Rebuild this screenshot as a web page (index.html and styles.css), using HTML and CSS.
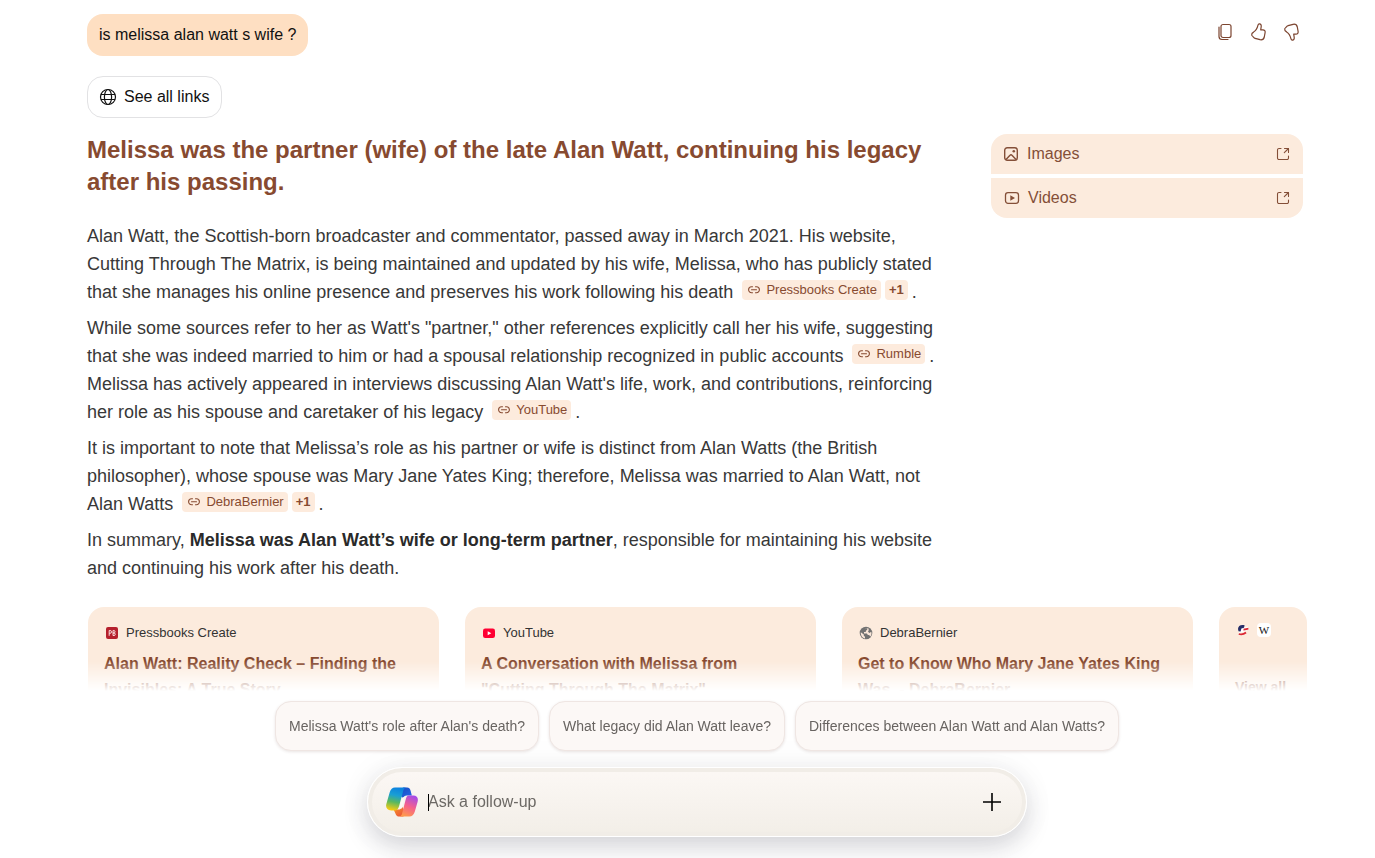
FILE: index.html
```html
<!DOCTYPE html>
<html lang="en">
<head>
<meta charset="utf-8">
<meta name="viewport" content="width=device-width, initial-scale=1">
<title>is melissa alan watt s wife ?</title>
<link rel="stylesheet" href="styles.css">
</head>
<body>
<svg class="sprite" aria-hidden="true">
  <symbol id="link" viewBox="0 0 14 14"><path d="M5.500 3.800H4.600a3 3 0 0 0 0 6h.9M8.500 3.800h.9a3 3 0 0 1 0 6h-.9M4.500 6.800h5" fill="none" stroke="currentColor" stroke-width="1.100" stroke-linecap="round"/></symbol>
  <symbol id="open" viewBox="0 0 14 14"><path d="M5 1.500H3A1.500 1.500 0 0 0 1.500 3v8A1.500 1.500 0 0 0 3 12.500h8a1.500 1.500 0 0 0 1.500-1.500V9M8.500 1.500h4v4M12.500 1.500L8.300 5.700" fill="none" stroke="currentColor" stroke-width="1.100" stroke-linecap="round" stroke-linejoin="round"/></symbol>
  <symbol id="thumb" viewBox="0 0 18 20"><path d="M10.300 1.900c1.500-.2 2.100 1.100 1.900 2.800l-.5 3.200h2.200c1.700 0 2.500 1.200 2.200 2.800l-.8 4.300c-.5 2.100-2 3.100-4.200 2.700l-5-1.400c-.9-.2-1.300-.8-1.900-1.500-.6-.7-1.300-.9-1.500-1.600-.2-1.300.6-2.400 1.900-3.100C6.700 8.900 8.200 6.500 9 3.200c.2-.8.600-1.200 1.300-1.300z" fill="none" stroke="currentColor" stroke-width="1.200" stroke-linejoin="round"/></symbol>
</svg>

<main class="page">
  <header class="topbar">
    <p class="query">is melissa alan watt s wife ?</p>
    <div class="actions">
      <button type="button" aria-label="Copy"><svg viewBox="0 0 18 20"><rect x="5" y="2.500" width="10" height="13" rx="2" fill="none" stroke="currentColor" stroke-width="1.200"/><path d="M3 5v9.500a3 3 0 0 0 3 3h6" fill="none" stroke="currentColor" stroke-width="1.200" stroke-linecap="round"/></svg></button>
      <button type="button" aria-label="Like"><svg viewBox="0 0 18 20"><use href="#thumb"/></svg></button>
      <button type="button" aria-label="Dislike"><svg class="flip" viewBox="0 0 18 20"><use href="#thumb"/></svg></button>
    </div>
  </header>

  <button type="button" class="all-links">
    <svg viewBox="0 0 18 18"><g fill="none" stroke="currentColor" stroke-width="1.200"><circle cx="9" cy="9" r="7.500"/><ellipse cx="9" cy="9" rx="3.600" ry="7.500"/><path d="M2 6.500h14M2 11.500h14"/></g></svg>
    See all links
  </button>

  <div class="columns">
    <article class="answer">
      <h1>Melissa was the partner (wife) of the late Alan Watt, continuing his legacy after his passing.</h1>
      <p>Alan Watt, the Scottish-born broadcaster and commentator, passed away in March 2021. His website, Cutting Through The Matrix, is being maintained and updated by his wife, Melissa, who has publicly stated that she manages his online presence and preserves his work following his death <span class="cites"><a class="cite" href="#"><svg><use href="#link"/></svg>Pressbooks Create</a><a class="cite more" href="#">+1</a></span>.</p>
      <p>While some sources refer to her as Watt's "partner," other references explicitly call her his wife, suggesting that she was indeed married to him or had a spousal relationship recognized in public accounts <span class="cites"><a class="cite" href="#"><svg><use href="#link"/></svg>Rumble</a></span>. Melissa has actively appeared in interviews discussing Alan Watt's life, work, and contributions, reinforcing her role as his spouse and caretaker of his legacy <span class="cites"><a class="cite" href="#"><svg><use href="#link"/></svg>YouTube</a></span>.</p>
      <p>It is important to note that Melissa’s role as his partner or wife is distinct from Alan Watts (the British philosopher), whose spouse was Mary Jane Yates King; therefore, Melissa was married to Alan Watt, not Alan Watts <span class="cites"><a class="cite" href="#"><svg><use href="#link"/></svg>DebraBernier</a><a class="cite more" href="#">+1</a></span>.</p>
      <p>In summary, <strong>Melissa was Alan Watt’s wife or long-term partner</strong>, responsible for maintaining his website and continuing his work after his death.</p>
    </article>

    <aside class="media">
      <a href="#"><svg viewBox="0 0 16 16"><g fill="none" stroke="currentColor" stroke-width="1.400"><rect x="1.700" y="1.700" width="12.600" height="12.600" rx="2.500"/><path d="M3 13.500l4-4.300a1.300 1.300 0 0 1 2 0l4 4.300"/></g><circle cx="10.800" cy="5.200" r="1.300" fill="currentColor"/></svg><span>Images</span><svg class="open"><use href="#open"/></svg></a>
      <a href="#" class="videos"><svg viewBox="0 0 16 16"><rect x="1.500" y="2.700" width="13" height="10.600" rx="2.500" fill="none" stroke="currentColor" stroke-width="1.300"/><path d="M6.300 5.200v5.600L11 8z" fill="currentColor"/></svg><span>Videos</span><svg class="open"><use href="#open"/></svg></a>
    </aside>
  </div>

  <section class="sources" aria-label="Sources">
    <a class="card" href="#">
      <span class="site"><svg viewBox="0 0 14 14"><rect x="1" y="1" width="12" height="12" rx="2" fill="#b5202d"/><path d="M4.200 9.800V4.500h.9a1.300 1.300 0 0 1 0 2.800h-.9M8 4.500v5h1a1.200 1.200 0 0 0 0-2.500H8h.8a1.200 1.200 0 0 0 0-2.500z" fill="none" stroke="#f8dcdc"/></svg>Pressbooks Create</span>
      <span class="title">Alan Watt: Reality Check – Finding the Invisibles: A True Story</span>
    </a>
    <a class="card" href="#">
      <span class="site"><svg viewBox="0 0 14 14"><rect x="1" y="2.500" width="12" height="9.500" rx="2.200" fill="#f03"/><path d="M5.700 5.200v4L9.300 7.200z" fill="#fff"/></svg>YouTube</span>
      <span class="title">A Conversation with Melissa from "Cutting Through The Matrix"</span>
    </a>
    <a class="card" href="#">
      <span class="site"><svg viewBox="0 0 14 14"><circle cx="7" cy="7" r="6.300" fill="#727272"/><path d="M1.800 6.300l3 2.300v1.200l1.200.9v1.800C3.500 12 1.500 9.600 1.800 6.300zM5.500 1.900h2.800v1.600L6.800 5v1H5v1.400h2.900l1 1.700h1.200l1.300 1.300c1-1.200 1.400-3 .8-4.700L10.500 7 9 5.700 9.800 4 9.300 2.200z" fill="#f8e5d8"/></svg>DebraBernier</span>
      <span class="title">Get to Know Who Mary Jane Yates King Was. - DebraBernier</span>
    </a>
    <a class="card view-all" href="#">
      <span class="site"><svg viewBox="0 0 14 14"><path d="M4.500 5.200L12 3.500l.5 3L7 9l-4 1z" fill="#fff"/><path d="M2 6C2 2.800 4.800 1.200 8.600 2.200L8 4.800l-2.600.6L4.600 8.500 2.500 8.200z" fill="#252d68"/><path d="M7.500 6.500c1.800.2 2.800-.6 4.900-.8M2.800 11c3 1 5.400 0 7.200-1.500" fill="none" stroke="#db2734" stroke-width="1.800"/></svg><span class="wiki">W</span></span>
      <span class="title">View all</span>
    </a>
  </section>
</main>

<footer class="dock">
  <div class="suggestions">
    <button type="button">Melissa Watt's role after Alan's death?</button>
    <button type="button">What legacy did Alan Watt leave?</button>
    <button type="button">Differences between Alan Watt and Alan Watts?</button>
  </div>
  <form class="composer">
    <svg class="logo" viewBox="0 0 34 32" aria-hidden="true">
      <defs>
        <linearGradient id="cool" x1="0.600" y1="0" x2="0.400" y2="1"><stop offset="0" stop-color="#0b80e0"/><stop offset=".35" stop-color="#1a9fd4"/><stop offset=".65" stop-color="#58b860"/><stop offset="1" stop-color="#f5cb12"/></linearGradient>
        <linearGradient id="warm" x1="0.700" y1="0" x2="0.300" y2="1"><stop offset="0" stop-color="#a64be8"/><stop offset=".5" stop-color="#f5608c"/><stop offset="1" stop-color="#ff9c4a"/></linearGradient>
        <linearGradient id="navy" x1="0" y1="0" x2="1" y2="1"><stop offset="0" stop-color="#164cc0"/><stop offset="1" stop-color="#2869e8"/></linearGradient>
        <linearGradient id="ember" x1="0" y1="0" x2="1" y2="1"><stop offset="0" stop-color="#f79a28"/><stop offset="1" stop-color="#e9463e"/></linearGradient>
      </defs>
      <path d="M18 .5h4.500c2 0 3 1.200 3.600 3.200L27.500 9H22c-2 0-3 1-3.600 3L15 9z" fill="url(#navy)"/>
      <path d="M8 24h5c2 0 3.500-1 4-3l3.500 5-2 5.500H14c-2 0-3.300-1-3.900-3z" fill="url(#ember)"/>
      <path d="M9.500.5H22c-2 0-3 1.200-3.500 3l-4.600 16.700C13.200 23 11.800 25 9.200 25H5.500C1 25-.7 22 .3 18L3.900 5.500C4.900 2.300 6.700.5 9.500.5z" fill="url(#cool)"/>
      <path d="M24.500 9H29c4.200 0 5.700 3 4.600 7l-3 10.500c-1 3.300-2.900 5-5.700 5H13.500c2 0 3-1.200 3.500-3l4-15.500C21.600 10.500 22.500 9 24.500 9z" fill="url(#warm)"/>
      <path d="M20.500 10.500c-.8.700-1.100 1.700-1.400 3l-2.400 9.500h-3.200c.6-.8 1-2 1.300-3.100l2.100-7.500c.6-1.300 1.800-1.900 3.600-1.900z" fill="#fcf8f5"/>
    </svg>
    <div class="field">
      <input type="text" aria-label="Ask a follow-up" placeholder="Ask a follow-up">
    </div>
    <button type="button" aria-label="Add"><svg viewBox="0 0 18 18"><path d="M9 0v18M0 9h18" stroke="currentColor" stroke-width="1.600"/></svg></button>
  </form>
</footer>
</body>
</html>
```
FILE: styles.css
```css
* { box-sizing: border-box; }
html, body { height: 100%; }
body {
  margin: 0;
  overflow: hidden;
  background: #fff;
  color: #383838;
  font-family: "Liberation Sans", Arial, sans-serif;
  font-size: 16px;
}
h1, p { margin: 0; }
a { color: inherit; text-decoration: none; }
button, input { font: inherit; color: inherit; }
button { border: 0; background: none; padding: 0; cursor: pointer; }
svg { flex: none; }
.sprite { display: none; }

.page { padding: 14px 68px 0 87px; }
.topbar { display: flex; justify-content: space-between; align-items: flex-start; }
.query {
  padding: 10px 12px;
  border-radius: 16px;
  background: #fedfc2;
  color: #111;
  line-height: 22px;
}
.actions { display: flex; gap: 15px; padding: 8px 7px 0 0; color: #7c4530; }
.actions svg { display: block; width: 18px; height: 20px; }
.flip { transform: scaleY(-1); }

.all-links {
  display: flex;
  align-items: center;
  gap: 7px;
  height: 42px;
  margin-top: 20px;
  padding: 0 12px 0 11px;
  border: 1px solid #e2e2e4;
  border-radius: 16px;
  color: #111;
}
.all-links svg { width: 18px; height: 18px; }

.columns {
  display: grid;
  grid-template-columns: minmax(0, 1fr) 312px;
  gap: 56px;
  align-items: start;
  padding: 16px 4px 0 0;
}
.answer { display: grid; gap: 8px; font-size: 18px; line-height: 28px; }
.answer h1 { margin-bottom: 16px; color: #874a30; font-size: 24px; line-height: 32px; }
.answer strong { color: #2a2a2a; }
.cites {
  display: inline-flex;
  gap: 4px;
  margin: 0 4px;
  vertical-align: 1px;
  font-size: 13px;
  line-height: 20px;
  color: #874a30;
}
.cite { display: flex; align-items: center; gap: 5px; padding: 0 4px 0 5px; border-radius: 4px; background: #fdebdd; }
.cite svg { width: 14px; height: 14px; }
.more { font-weight: bold; padding: 0 4px; }

.media { display: grid; gap: 4px; border-radius: 16px; overflow: hidden; color: #844f38; }
.media a { display: flex; align-items: center; gap: 8px; height: 40px; padding: 0 13px 0 12px; background: #fcebdd; }
.media .videos { padding-left: 13px; }
.media a svg { width: 16px; height: 16px; }
.media span { flex: 1; }
.media a .open { width: 14px; height: 14px; }

.sources {
  display: grid;
  grid-template-columns: repeat(3, minmax(0, 1fr)) 88px;
  gap: 26px;
  margin-top: 25px;
  padding-left: 1px;
}
.card { height: 132px; padding: 16px; border-radius: 16px; background: #fcebdd; }
.site { display: flex; align-items: center; gap: 7px; height: 20px; padding-left: 1px; font-size: 13px; line-height: 18px; color: #333; }
.site svg { width: 14px; height: 14px; }
.title { display: block; margin-top: 8px; color: #874a30; font-size: 16px; font-weight: bold; line-height: 26px; }
.view-all .site { height: 14px; }
.view-all .title { margin-top: 37px; font-size: 14px; }
.wiki {
  width: 14px;
  border-radius: 4px;
  background: #fff;
  color: #111;
  font-family: "Liberation Serif", serif;
  font-size: 11px;
  line-height: 14px;
  text-align: center;
}

.dock {
  position: fixed;
  inset: auto 0 0 0;
  padding: 40px 68px 21px 87px;
  background: linear-gradient(rgba(255, 255, 255, 0), #fff 30px);
}
.suggestions { display: flex; justify-content: center; gap: 10px; }
.suggestions button {
  height: 50px;
  padding: 0 13px;
  border: 1px solid #efe6e3;
  border-radius: 16px;
  background: #fcf8f6;
  box-shadow: 0 1px 3px rgba(80, 40, 30, .12);
  color: #686461;
  font-size: 14px;
}
.composer {
  display: flex;
  align-items: center;
  max-width: 660px;
  height: 70px;
  margin: 16px auto 0;
  padding: 0 25px 0 18px;
  border: 1px solid #fff;
  border-radius: 35px;
  background: linear-gradient(#fcf8f5, #f2eee7);
  box-shadow: inset 0 0 0 4px #f1ede7, 0 10px 24px rgba(40, 40, 60, .18), 0 0 40px rgba(40, 40, 60, .04);
}
.logo { width: 32px; height: 30px; }
.field { position: relative; flex: 1; min-width: 0; margin-left: 10px; }
.field::before {
  content: "";
  position: absolute;
  top: 12px;
  left: 0;
  width: 1px;
  height: 17px;
  background: #000;
}
.field input {
  display: block;
  width: 100%;
  height: 40px;
  padding: 0;
  border: 0;
  outline: 0;
  background: none;
}
.field input::placeholder { color: #6c6965; opacity: 1; }
.composer button { color: #000; }
.composer button svg { display: block; width: 18px; height: 18px; }
```
